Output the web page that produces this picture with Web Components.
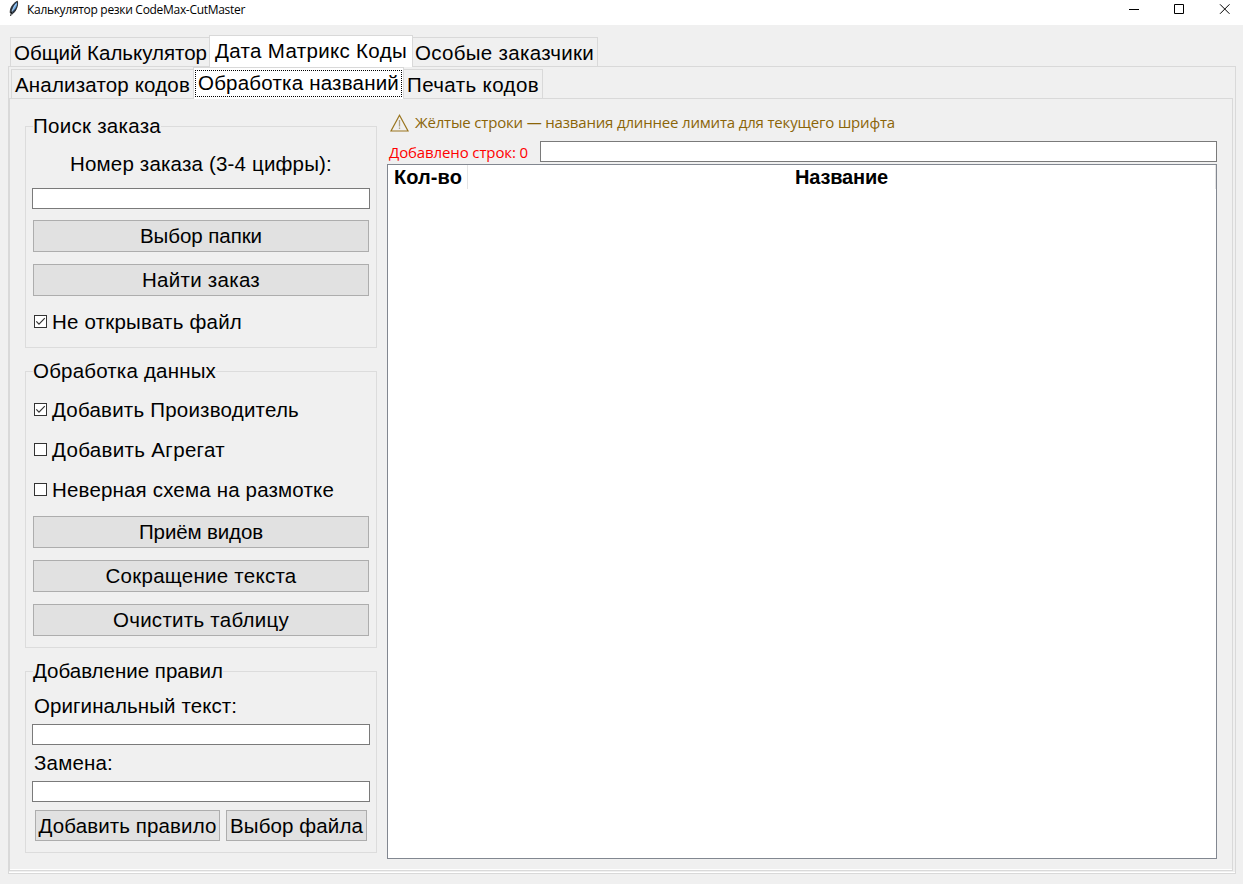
<!DOCTYPE html>
<html lang="ru">
<head>
<meta charset="utf-8">
<title>Калькулятор резки CodeMax-CutMaster</title>
<style>
html, body { margin: 0; height: 100%; overflow: hidden; background: #f0f0f0; }
body { font: 20.5px/22px "Liberation Sans", Arial, sans-serif; color: #000; }
</style>
</head>
<body>
<cut-app></cut-app>
<script>
const define = (name, html, init) => {
  const tpl = document.createElement('template');
  tpl.innerHTML = '<style>*{box-sizing:border-box}:host{box-sizing:border-box}</style>' + html;
  customElements.define(name, class extends HTMLElement {
    connectedCallback() {
      if (this.shadowRoot) return;
      this.attachShadow({ mode: 'open' }).append(tpl.content.cloneNode(true));
      if (init) init(this, this.shadowRoot);
    }
  });
};

/* Text run tracked to a given advance width (attribute w, in px). */
define('ui-text', `<style>
  :host{display:block;white-space:pre;flex:none}
  span{display:inline-block;white-space:pre}
</style><span><slot></slot></span>`, (el, root) => {
  const w = +el.getAttribute('w');
  if (!w) return;
  const span = root.querySelector('span');
  const n = el.textContent.length;
  const gap = (w - span.getBoundingClientRect().width) / n;
  span.style.letterSpacing = gap.toFixed(3) + 'px';
});

define('ui-button', `<style>
  :host{display:flex;align-items:center;justify-content:center;height:32px;background:#e1e1e1;border:1px solid #adadad;flex:none}
</style><slot></slot>`);

define('ui-entry', `<style>
  :host{display:block;height:21px;background:#fff;border:1px solid #7a7a7a;flex:none}
</style>`);

define('ui-check', `<style>
  :host{display:flex;height:22px;align-items:flex-start;flex:none}
  svg{display:block;margin:4px 5px 0 0;flex:none}
  path{display:none}
  :host([checked]) path{display:inline}
</style><svg width="13" height="13" viewBox="0 0 13 13"><rect x=".5" y=".5" width="12" height="12" fill="#fff" stroke="#333"/><path d="M2.3 6.3 5 9.2 10.8 3.2" fill="none" stroke="#333" stroke-width="1.2"/></svg><slot></slot>`);

define('ui-group', `<style>
  :host{display:flex;flex-direction:column;border:1px solid #dcdcdc;width:352px;padding:0 6px;flex:none}
  header{align-self:flex-start;margin:-12px 0 0 1px;height:22px;background:#f0f0f0}
</style><header><slot name="legend"></slot></header><slot></slot>`);

define('ui-tab', `<style>
  :host{display:block;height:29px;border:1px solid #d9d9d9;border-bottom:0;margin-left:-1px;padding:4px 0 0 3px;flex:none}
  :host([selected]){height:32px;background:#fff;margin-bottom:-1px;position:relative;padding-left:5px}
  :host([focused])::after{content:"";position:absolute;inset:2px 1px 2px 1px;border:1px dotted #000}
</style><slot></slot>`);

define('ui-tabs', `<style>
  :host{display:flex;flex-direction:column;min-height:0}
  nav{display:flex;align-items:flex-end;height:31px;padding-left:3px;flex:none}
  main{display:flex;flex:1;min-height:0;border:1px solid #d9d9d9;box-shadow:inset 0 -1px #fff}
</style><nav><slot name="tab"></slot></nav><main><slot></slot></main>`);

define('ui-titlebar', `<style>
  :host{display:flex;height:25px;background:#fff;font:12px/18px "Open Sans","Noto Sans",sans-serif;flex:none}
  .icon{margin:0 0 0 8px;flex:none}
  ui-text{margin:1px 0 0 5px}
  .ctl{margin-left:auto;flex:none}
</style>
<svg class="icon" width="14" height="18" viewBox="0 0 14 18">
  <path d="M9.4 1.2C5.5 3 2 7.5 2.2 12.8L4.2 14C7.8 11.5 10.4 6 9.4 1.2Z" fill="#2c3a4c" stroke="#111" stroke-width=".8"/>
  <path d="M9 2.2C6 4.500 4.600 8 4.400 11.400 7.300 9 9.600 5.600 9 2.200Z" fill="#6aa8e4"/>
  <path d="M8 4.200C5.800 6.800 4.400 9.600 2.700 15.400" fill="none" stroke="#cfe4f5" stroke-width=".8"/>
  <path d="M3.800 11.500 2.600 16" stroke="#111" stroke-width="1"/>
</svg>
<ui-text w="218">Калькулятор резки CodeMax-CutMaster</ui-text>
<svg class="ctl" width="115" height="18" viewBox="0 0 115 18" fill="none" stroke="#000">
  <path d="M1 9.5h10M46.500 4.500h9v9h-9zM92 4.300l9.500 9.500M101.500 4.300 92 13.800"/>
</svg>`);

define('ui-table', `<style>
  :host{display:block;background:#fff;border:1px solid #828790;font-weight:bold;font-size:20px;flex:1;min-height:0}
  .head{display:flex;height:24px;margin-top:0}
  .head div{display:flex;justify-content:center;padding-top:1px;border-right:1px solid #e5e5e5}
  .a{width:80px;padding-left:1px}.b{flex:1}
</style><div class="head"><div class="a"><ui-text w="68">Кол-во</ui-text></div><div class="b"><ui-text w="93">Название</ui-text></div></div>`);

define('order-panel', `<style>
  :host{display:flex;flex-direction:column;width:352px;margin:27px 10px 0 15px;flex:none}
  .g1{height:222px}.g2{height:277px;margin-top:23px}.g3{height:182px;margin-top:23px}
  ui-button{margin:0 1px 12px}
  ui-check{margin-left:2px}
  .row{display:flex;gap:6px;padding:8px 3px 0}
  .row ui-button{margin:0;height:31px}
</style>
<ui-group class="g1">
  <ui-text slot="legend" w="128">Поиск заказа</ui-text>
  <ui-text w="262" style="margin:16px auto 13px">Номер заказа (3-4 цифры):</ui-text>
  <ui-entry style="margin-bottom:11px"></ui-entry>
  <ui-button><ui-text w="122">Выбор папки</ui-text></ui-button>
  <ui-button><ui-text w="118">Найти заказ</ui-text></ui-button>
  <ui-check checked style="margin-top:3px"><ui-text w="190">Не открывать файл</ui-text></ui-check>
</ui-group>
<ui-group class="g2">
  <ui-text slot="legend" w="183">Обработка данных</ui-text>
  <ui-check checked style="margin-top:17px"><ui-text w="247">Добавить Производитель</ui-text></ui-check>
  <ui-check style="margin-top:18px"><ui-text w="173">Добавить Агрегат</ui-text></ui-check>
  <ui-check style="margin:18px 0 15px 2px"><ui-text w="282">Неверная схема на размотке</ui-text></ui-check>
  <ui-button><ui-text w="124">Приём видов</ui-text></ui-button>
  <ui-button><ui-text w="191">Сокращение текста</ui-text></ui-button>
  <ui-button><ui-text w="176">Очистить таблицу</ui-text></ui-button>
</ui-group>
<ui-group class="g3">
  <ui-text slot="legend" w="190">Добавление правил</ui-text>
  <ui-text w="203" style="margin:13px 0 7px 2px">Оригинальный текст:</ui-text>
  <ui-entry></ui-entry>
  <ui-text w="79" style="margin:7px 0 7px 2px">Замена:</ui-text>
  <ui-entry></ui-entry>
  <div class="row"><ui-button style="width:185px"><ui-text w="178">Добавить правило</ui-text></ui-button><ui-button style="width:141px"><ui-text w="133">Выбор файла</ui-text></ui-button></div>
</ui-group>`);

define('names-panel', `<style>
  :host{display:flex;flex-direction:column;flex:1;margin:14px 15px 11px 0}
  .hint,.bar{display:flex;font:15px/20px "Open Sans","Noto Sans",sans-serif;flex:none}
  .hint{height:28px;padding-left:3px;color:#8b6508}
  .hint svg{margin:0 6px 0 0;flex:none}
  .hint ui-text{margin-top:-1px}
  .bar{height:23px;padding-left:2px;color:#f00}
  .bar ui-text{margin:1px 12px 0 0}
  .bar ui-entry{flex:1}
</style>
<div class="hint"><svg width="19" height="19" viewBox="0 0 19 19" fill="none" stroke="#9a751f" stroke-width="1.200"><path d="M9.500 2.200 18 18H1Z"/><path d="M9.500 7v6.500M9.500 14.500v1.500" stroke="#b0a488" stroke-width="1.300"/></svg><ui-text w="480">Жёлтые строки — названия длиннее лимита для текущего шрифта</ui-text></div>
<div class="bar"><ui-text w="139">Добавлено строк: 0</ui-text><ui-entry></ui-entry></div>
<ui-table></ui-table>`);

define('cut-app', `<style>
  :host{display:flex;flex-direction:column;width:1243px;height:884px;background:#f0f0f0}
  .outer{margin:10px 7px 10px 8px;flex:1}
  .inner{flex:1;margin:0 2px 2px 0;}
</style>
<ui-titlebar></ui-titlebar>
<ui-tabs class="outer">
  <ui-tab slot="tab" style="width:200px"><ui-text w="193">Общий Калькулятор</ui-text></ui-tab>
  <ui-tab slot="tab" selected style="width:204px"><ui-text w="192">Дата Матрикс Коды</ui-text></ui-tab>
  <ui-tab slot="tab" style="width:186px;padding-left:2px"><ui-text w="179">Особые заказчики</ui-text></ui-tab>
  <ui-tabs class="inner">
    <ui-tab slot="tab" style="width:183px;padding-left:3px"><ui-text w="175">Анализатор кодов</ui-text></ui-tab>
    <ui-tab slot="tab" selected focused style="width:211px;padding-left:4px"><ui-text w="201">Обработка названий</ui-text></ui-tab>
    <ui-tab slot="tab" style="width:140px;padding-left:3px"><ui-text w="132">Печать кодов</ui-text></ui-tab>
    <order-panel></order-panel>
    <names-panel></names-panel>
  </ui-tabs>
</ui-tabs>`);
</script>
</body>
</html>
